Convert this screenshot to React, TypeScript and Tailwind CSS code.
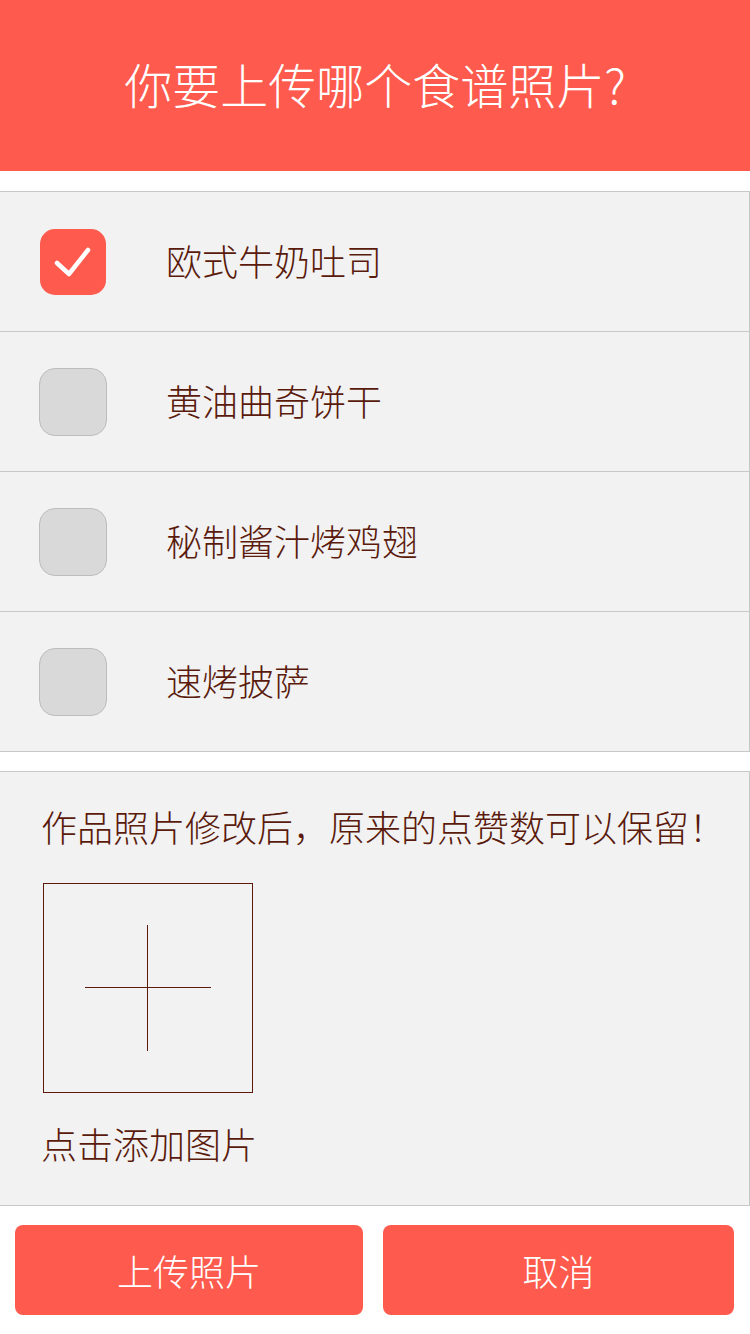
const recipes = [
  { name: "欧式牛奶吐司", checked: true },
  { name: "黄油曲奇饼干", checked: false },
  { name: "秘制酱汁烤鸡翅", checked: false },
  { name: "速烤披萨", checked: false },
];

function CheckBox({ checked }: { checked: boolean }) {
  if (checked) {
    return (
      <div className="w-[66px] h-[66px] rounded-[15px] bg-[#fe5a4d] flex items-center justify-center">
        <svg width="66" height="66" viewBox="0 0 66 66" fill="none">
          <path
            d="M17 42 L29 53 L48 29"
            stroke="#ffffff"
            strokeWidth="4.5"
            strokeLinecap="round"
            strokeLinejoin="round"
            transform="translate(0 -8)"
          />
        </svg>
      </div>
    );
  }
  return <div className="w-[68px] h-[68px] rounded-[16px] bg-[#d9d9d9] border border-[#bdbdbd]" />;
}

export default function App() {
  return (
    <div
      className="w-[750px] min-h-[1334px] bg-white text-[#5a1a0c]"
      style={{ fontFamily: '"Noto Sans CJK SC", "Noto Sans", sans-serif' }}
    >
      <header className="h-[171px] bg-[#fe5a4d] flex items-center justify-center pb-[6px]">
        <h1 className="text-[48px] font-light text-white leading-none">你要上传哪个食谱照片?</h1>
      </header>

      <div className="mt-[20px] bg-[#f2f2f2] border-b border-r border-[#c8c8c8]">
        {recipes.map((r) => (
          <div key={r.name} className="h-[140px] flex items-center pl-[39px] border-t border-[#c8c8c8]">
            <div className="w-[68px] flex items-center justify-center">
              <CheckBox checked={r.checked} />
            </div>
            <span className="ml-[59px] pb-[4px] text-[36px] font-light leading-none">{r.name}</span>
          </div>
        ))}
      </div>

      <div className="mt-[19px] h-[435px] bg-[#f2f2f2] border-t border-b border-r border-[#c8c8c8] pl-[41px] pt-[32px]">
        <p className="text-[36px] font-light leading-[44px]">作品照片修改后，原来的点赞数可以保留！</p>
        <button className="mt-[35px] ml-[2px] w-[210px] h-[210px] border border-[#5a1a0c] flex items-center justify-center">
          <svg width="128" height="128" viewBox="0 0 128 128">
            <line x1="1" y1="63.5" x2="127" y2="63.5" stroke="#5a1a0c" strokeWidth="1" />
            <line x1="63.5" y1="1" x2="63.5" y2="127" stroke="#5a1a0c" strokeWidth="1" />
          </svg>
        </button>
        <p className="mt-[28px] text-[36px] font-light leading-[44px]">点击添加图片</p>
      </div>

      <div className="flex gap-[20px] px-[15px] pt-[19px]">
        <button className="w-[348px] h-[90px] rounded-[8px] bg-[#fe5a4d] text-white text-[36px] font-light">上传照片</button>
        <button className="w-[351px] h-[90px] rounded-[8px] bg-[#fe5a4d] text-white text-[36px] font-light">取消</button>
      </div>
    </div>
  );
}
